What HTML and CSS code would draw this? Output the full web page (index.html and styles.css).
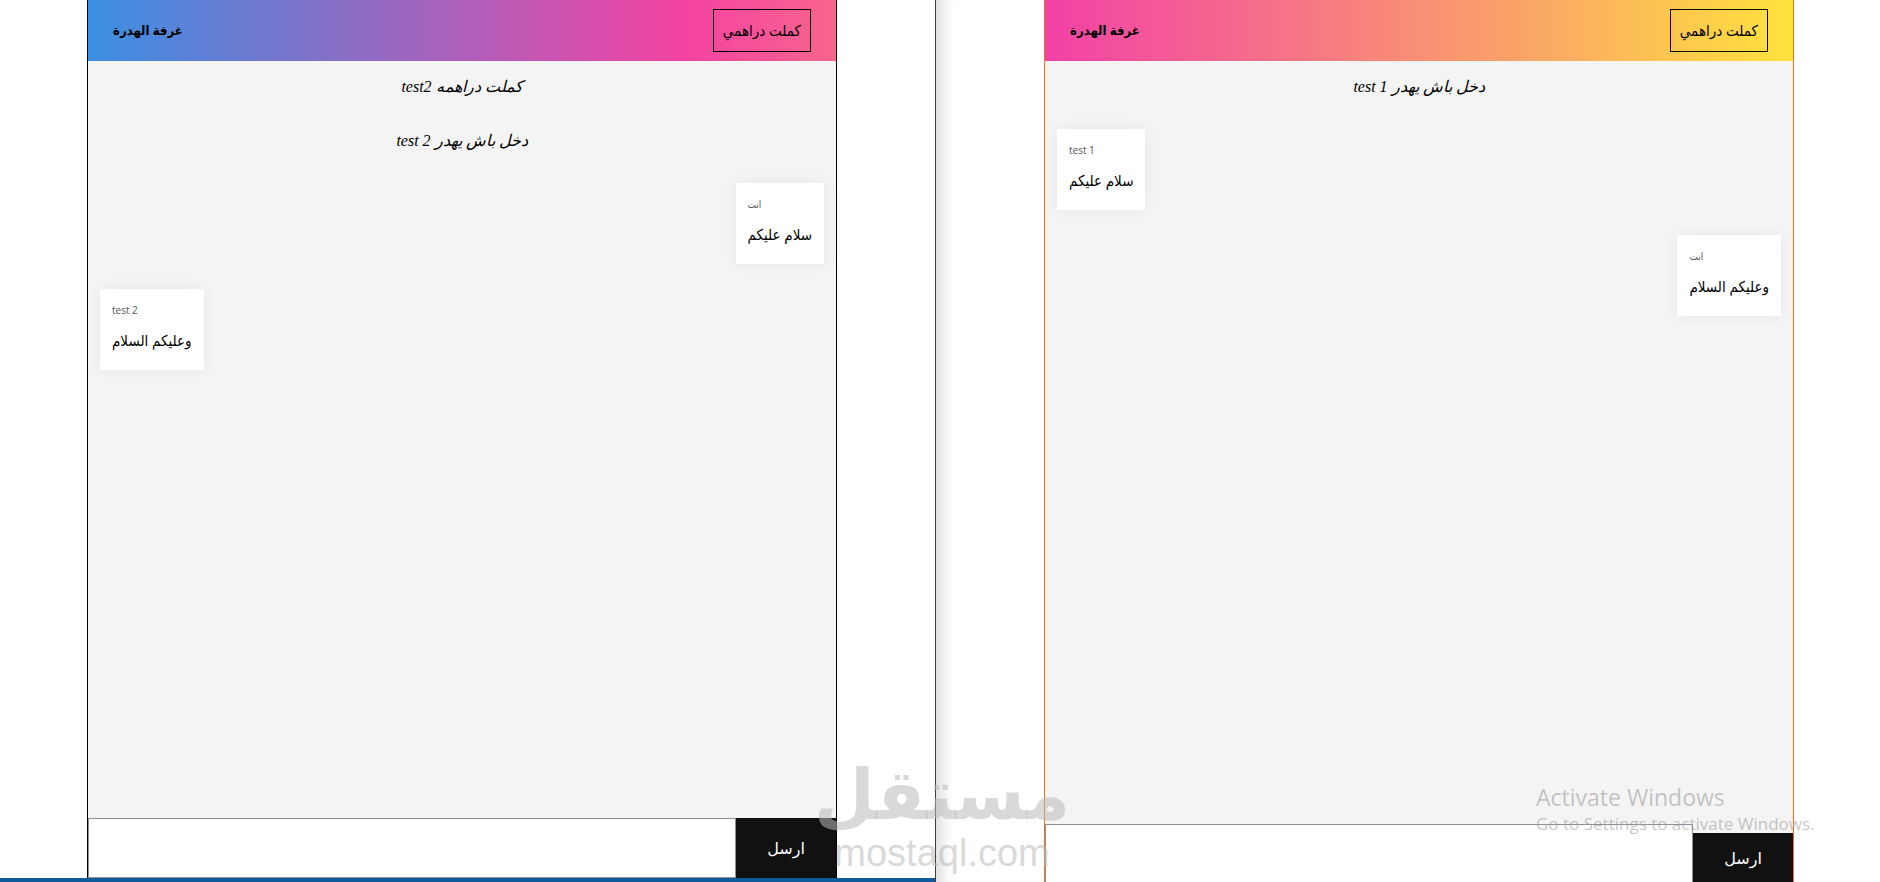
FILE: index.html
```html
<!DOCTYPE html>
<html lang="ar">
<head>
    <meta charset="UTF-8">
    <meta name="viewport" content="width=device-width, initial-scale=1.0">
    <title>غرفة الهدرة</title>
    <link rel="stylesheet" href="styles.css">
</head>
<body>
    <!-- first browser: test 2 -->
    <div class="desk desk-left">
        <div class="chat" dir="rtl">
            <header class="chat-head head-cool">
                <button class="out-btn">كملت دراهمي</button>
                <h1>غرفة الهدرة</h1>
            </header>
            <div class="messages">
                <p class="notice">كملت دراهمه test2</p>
                <p class="notice">دخل باش يهدر test 2</p>
                <div class="bubble mine">
                    <span class="who">انت</span>
                    <p>سلام عليكم</p>
                </div>
                <div class="bubble">
                    <span class="who">test 2</span>
                    <p>وعليكم السلام</p>
                </div>
            </div>
            <form class="send-form">
                <input type="text">
                <button type="button" class="send-btn">ارسل</button>
            </form>
        </div>
        <div class="taskbar"></div>
    </div>

    <!-- second browser: test 1 -->
    <div class="desk desk-right">
        <div class="chat chat-orange" dir="rtl">
            <header class="chat-head head-warm">
                <button class="out-btn">كملت دراهمي</button>
                <h1>غرفة الهدرة</h1>
            </header>
            <div class="messages">
                <p class="notice">دخل باش يهدر test 1</p>
                <div class="bubble">
                    <span class="who">test 1</span>
                    <p>سلام عليكم</p>
                </div>
                <div class="bubble mine">
                    <span class="who">انت</span>
                    <p>وعليكم السلام</p>
                </div>
            </div>
            <form class="send-form">
                <input type="text">
                <button type="button" class="send-btn send-low">ارسل</button>
            </form>
        </div>
    </div>

    <!-- overlays from the screen capture -->
    <div class="watermark">
        <span class="wm-ar">مستقل</span>
        <span class="wm-en">mostaql.com</span>
    </div>
    <div class="activate">
        <span class="act-title">Activate Windows</span>
        <span class="act-sub">Go to Settings to activate Windows.</span>
    </div>
</body>
</html>
```

FILE: styles.css
```css
body {
    margin: 0;
    height: 882px;
    overflow: hidden;
    display: flex;
    position: relative;
    background-color: #fff;
    font-family: "Liberation Serif", "DejaVu Sans Condensed", "DejaVu Sans", serif;
}
.desk {
    height: 882px;
}
.desk-left {
    width: 935px;
    border-right: 1px solid #3d3d3d;
    display: flex;
    flex-direction: column;
}
.desk-left .chat {
    margin-left: 87px;
    flex: 1;
    min-height: 0;
}
.taskbar {
    height: 4px;
    background-color: #0f5a9c;
}
.desk-right {
    flex: 1;
    padding-left: 108px;
    box-shadow: inset 16px 0 14px -10px rgba(0, 0, 0, 0.14);
}
.chat {
    width: 750px;
    box-sizing: border-box;
    border-left: 1px solid #000;
    border-right: 1px solid #000;
    display: flex;
    flex-direction: column;
    background-color: #f4f4f4;
}
.chat-orange {
    border-color: #e8711f;
    height: 884px;
}
.chat-head {
    height: 61px;
    flex: none;
    display: flex;
    align-items: center;
    justify-content: space-between;
    padding: 0 25px;
}
.head-cool {
    background: linear-gradient(to right, #3a8fe2 0%, #f443a2 80%, #f8658c 100%);
}
.head-warm {
    background: linear-gradient(to right, #f241a7 0%, #fbae60 70%, #ffe33c 100%);
}
.chat-head h1 {
    margin: 0;
    font-size: 13px;
    font-weight: bold;
}
.out-btn {
    height: 43px;
    padding: 0 9px;
    background: transparent;
    border: 1px solid #000;
    font-family: inherit;
    font-size: 15px;
    color: #000;
}
.messages {
    flex: 1;
    min-height: 0;
    padding: 14px 12px;
    display: flex;
    flex-direction: column;
    align-items: flex-start;
}
.notice {
    align-self: stretch;
    margin: 0 0 30px;
    line-height: 24px;
    font-size: 16px;
    font-style: italic;
    text-align: center;
}
.bubble {
    align-self: flex-end;
    background-color: #fff;
    padding: 14px 12px 17px;
    margin-bottom: 25px;
    box-shadow: 0 0 14px rgba(0, 0, 0, 0.06);
}
.bubble.mine {
    align-self: flex-start;
}
.who {
    display: block;
    margin-bottom: 12px;
    font: 10px/14px "Open Sans", "DejaVu Sans Condensed", sans-serif;
    color: #555;
    text-align: left;
}
.bubble p {
    margin: 0;
    font-size: 15px;
    line-height: 24px;
}
.send-form {
    direction: ltr;
    height: 60px;
    flex: none;
    display: flex;
    margin: 0;
}
.send-form input {
    flex: 1;
    min-width: 0;
    margin: 0;
    padding: 0 8px;
    border: 1px solid #8f8f9d;
    background-color: #fff;
}
.send-btn {
    width: 100px;
    border: none;
    background-color: #111;
    color: #fff;
    font-family: "DejaVu Sans", sans-serif;
    font-size: 16px;
}
.send-low {
    margin-top: 9px;
}
.watermark {
    position: absolute;
    left: 829px;
    top: 754px;
    width: 226px;
    display: flex;
    flex-direction: column;
    align-items: center;
    color: rgba(185, 185, 185, 0.55);
    pointer-events: none;
}
.wm-ar {
    font-family: "DejaVu Sans", sans-serif;
    font-weight: bold;
    font-size: 70px;
    line-height: 82px;
}
.wm-en {
    font-family: "Liberation Sans", sans-serif;
    font-size: 38px;
    line-height: 34px;
}
.activate {
    position: absolute;
    left: 1536px;
    top: 781px;
    display: flex;
    flex-direction: column;
    color: rgba(150, 150, 150, 0.55);
    font-family: "Open Sans", sans-serif;
    pointer-events: none;
}
.act-title {
    font-size: 23px;
    line-height: 32px;
}
.act-sub {
    font-size: 17px;
    line-height: 22px;
}
```
